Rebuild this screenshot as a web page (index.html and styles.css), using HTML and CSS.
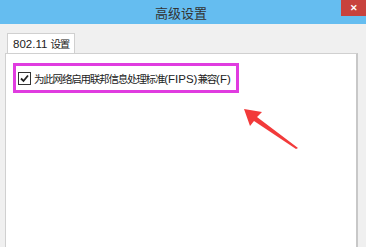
FILE: index.html
```html
<!DOCTYPE html>
<html lang="zh-CN">
<head>
    <meta charset="UTF-8">
    <title>高级设置</title>
    <link rel="stylesheet" href="styles.css">
</head>
<body>
    <div class="dialog">
        <div class="title-bar">
            <span class="title">高级设置</span>
            <div class="close-btn">&#x2715;</div>
        </div>
        <div class="content">
            <div class="tabs">
                <div class="tab active">802.11 <span class="cjk">设置</span></div>
            </div>
            <div class="tab-panel">
                <div class="highlight">
                    <label class="option">
                        <span class="checkbox">
                            <svg width="9" height="9" viewBox="0 0 9 9"><path d="M1 4.5 L3.5 7 L8 1.5" fill="none" stroke="#222" stroke-width="1.8"/></svg>
                        </span>
                        <span class="option-text"><span class="cjk">为此网络启用联邦信息处理标准</span>(FIPS)<span class="cjk">兼容</span>(F)</span>
                    </label>
                </div>
                <svg class="arrow" width="60" height="44" viewBox="0 0 60 44">
                    <polygon points="1,1 19,4 14,9 55,40 53,41 11,13 7,18" fill="#f23a3a"/>
                </svg>
            </div>
        </div>
    </div>
</body>
</html>
```
FILE: styles.css
```css
body {
    margin: 0;
    font-family: "Liberation Sans", "Noto Sans CJK SC", sans-serif;
    font-size: 12px;
    color: #222;
    overflow: hidden;
}

.dialog {
    width: 366px;
    height: 247px;
    background-color: #f0f0f0;
    display: flex;
    flex-direction: column;
}

.title-bar {
    height: 24px;
    background-color: #65bdf0;
    display: flex;
    justify-content: center;
    align-items: center;
    position: relative;
}

.title {
    font-family: "Noto Sans CJK SC", sans-serif;
    font-size: 13px;
    color: #333;
    margin-left: -4px;
}

.close-btn {
    position: absolute;
    top: 0;
    right: 0;
    width: 25px;
    height: 16px;
    background-color: #c8423d;
    color: #fff;
    font-size: 9px;
    font-weight: bold;
    display: flex;
    justify-content: center;
    align-items: center;
}

.content {
    flex: 1;
    padding: 9px 8px 0 5px;
    display: flex;
    flex-direction: column;
}

.tabs {
    display: flex;
    padding-left: 2px;
}

.tab {
    height: 20px;
    padding: 0 5px;
    border: 1px solid #d0d0d0;
    border-bottom: none;
    background-color: #fff;
    line-height: 20px;
    white-space: nowrap;
    font-size: 11.5px;
    margin-bottom: -1px;
    position: relative;
}

.cjk {
    font-family: "Noto Sans CJK SC", sans-serif;
    font-size: 10.5px;
    letter-spacing: -1.2px;
}

.tab-panel {
    flex: 1;
    background-color: #fff;
    border: 1px solid #d0d0d0;
    border-right: 2px solid #c8c8c8;
    border-bottom: none;
    padding: 9px 0 0 7px;
    position: relative;
}

.highlight {
    width: 220px;
    height: 24px;
    border: 3px solid #e03ce0;
    display: flex;
    align-items: center;
}

.option {
    display: flex;
    align-items: center;
    gap: 3px;
    padding-left: 2px;
    white-space: nowrap;
}

.option-text {
    font-size: 11.5px;
}

.checkbox {
    width: 11px;
    height: 11px;
    border: 1px solid #333;
    background-color: #fff;
    display: flex;
    justify-content: center;
    align-items: center;
}

.arrow {
    position: absolute;
    left: 237px;
    top: 54px;
}
```
